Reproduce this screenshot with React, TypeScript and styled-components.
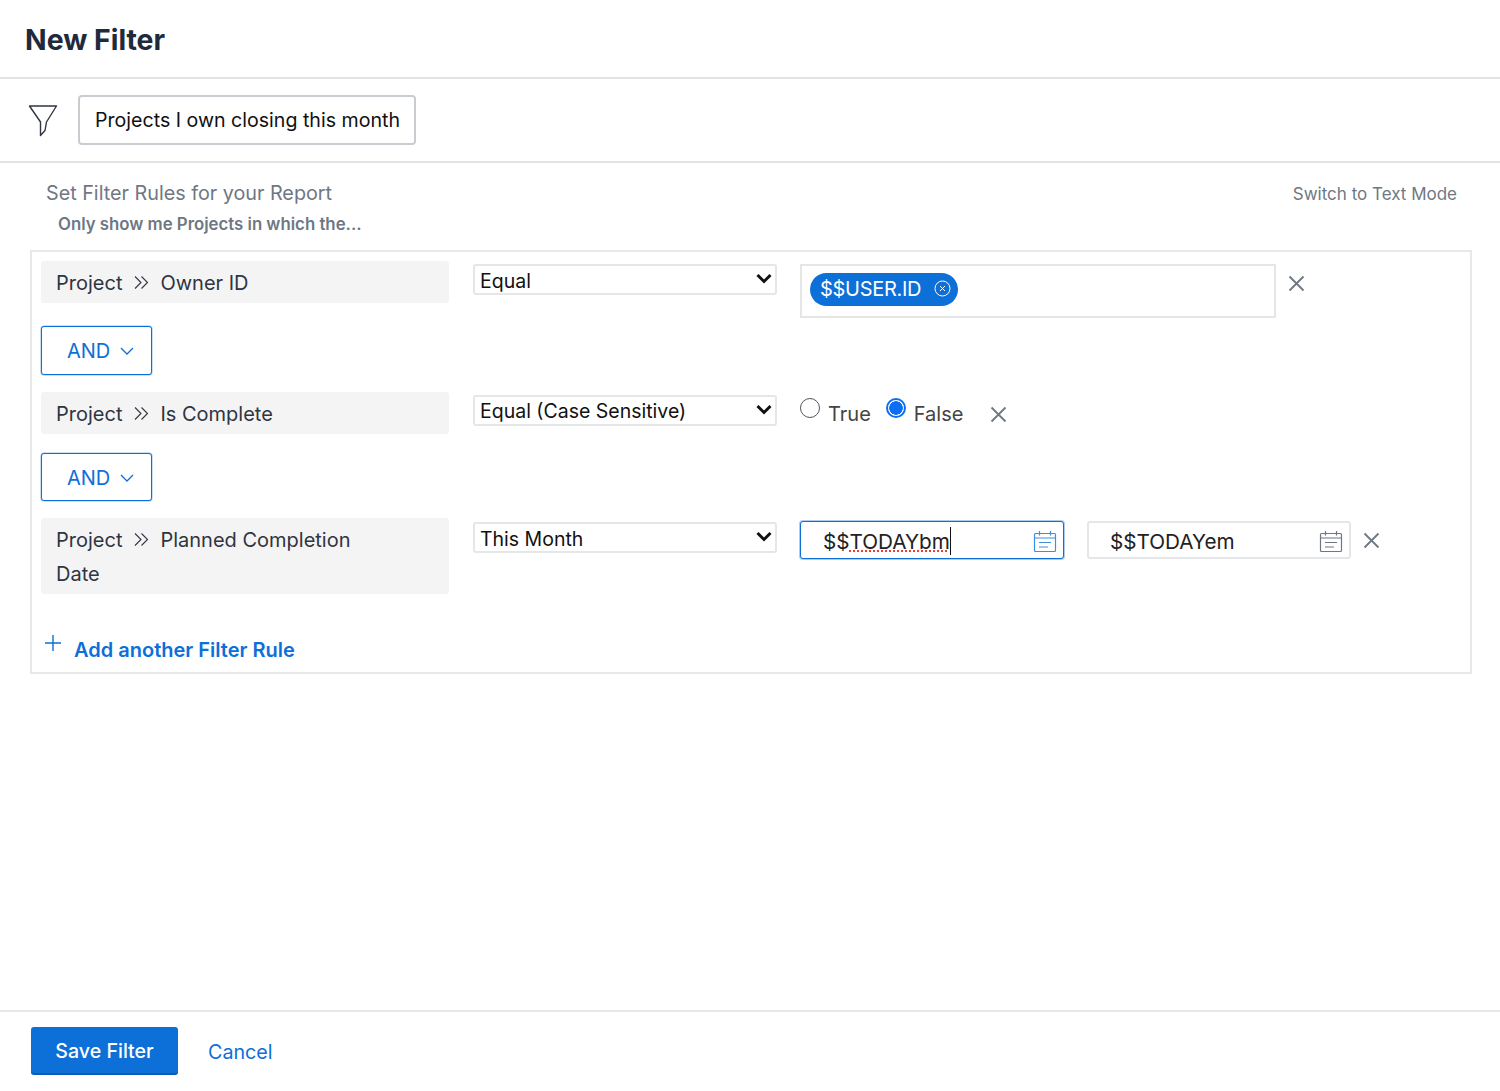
import styled, { createGlobalStyle } from "styled-components";

const BLUE = "#0d6fd8";

const GlobalStyle = createGlobalStyle`
    html, body {
        margin: 0;
        padding: 0;
        background: #fff;
    }
    body {
        font-family: "Inter", "Liberation Sans", sans-serif;
    }
    * {
        box-sizing: border-box;
    }
`;

function Chevrons() {
    return (
        <svg width="15" height="15" viewBox="0 0 15 15" fill="none" stroke="#2f3542" strokeWidth="1.1">
            <path d="M1 1.5 L7 7.5 L1 13.5" />
            <path d="M7.5 1.5 L13.5 7.5 L7.5 13.5" />
        </svg>
    );
}

function CloseIcon() {
    return (
        <svg width="17" height="17" viewBox="0 0 17 17" fill="none" stroke="#6f7782" strokeWidth="1.8">
            <path d="M1.5 1.5 L15.5 15.5 M15.5 1.5 L1.5 15.5" />
        </svg>
    );
}

function CalendarIcon(props: { color: string }) {
    return (
        <svg width="24" height="24" viewBox="0 0 24 24" fill="none" stroke={props.color} strokeWidth="1.2">
            <rect x="1.5" y="4.5" width="21" height="18" rx="1" />
            <path d="M1.5 9 H22.5 M6.5 2 V6.5 M17.5 2 V6.5 M6 13.5 H18 M6 18 H15" />
        </svg>
    );
}

function SmallChevron() {
    return (
        <svg width="14" height="8" viewBox="0 0 14 8" fill="none" stroke={BLUE} strokeWidth="1.3">
            <path d="M1 1 L7 7 L13 1" />
        </svg>
    );
}

function FieldPath(props: { name: string }) {
    return (
        <FieldBox>
            Project
            <ChevronGap><Chevrons /></ChevronGap>
            {props.name}
        </FieldBox>
    );
}

function Operator(props: { value: string; offset?: number }) {
    return (
        <SelectWrap $top={props.offset ?? 3}>
            <Select defaultValue={props.value}>
                <option>{props.value}</option>
            </Select>
            <SelectArrow width="16" height="11" viewBox="0 0 16 11" fill="none" stroke="#111" strokeWidth="3">
                <path d="M1.5 2 L8 8.5 L14.5 2" />
            </SelectArrow>
        </SelectWrap>
    );
}

export default function App() {
    return (
        <Page>
            <GlobalStyle />
            <Header>
                <Title>New Filter</Title>
            </Header>
            <NameRow>
                <svg width="30" height="34" viewBox="0 0 30 34" fill="none" stroke="#2f3542" strokeWidth="1.4">
                    <path d="M1.5 3 H28.5 L18.5 19 L17 27.5 L12.5 32.5 V19 Z" strokeLinejoin="round" />
                </svg>
                <NameInput defaultValue="Projects I own closing this month" />
            </NameRow>
            <Intro>
                <IntroTop>
                    <IntroTitle>Set Filter Rules for your Report</IntroTitle>
                    <SwitchLink>Switch to Text Mode</SwitchLink>
                </IntroTop>
                <IntroHint>Only show me Projects in which the...</IntroHint>
            </Intro>
            <RulesBox>
                <RuleRow>
                    <FieldPath name="Owner ID" />
                    <Operator value="Equal" />
                    <ValueCell>
                        <TagBox>
                            <Tag>
                                $$USER.ID
                                <svg width="17" height="17" viewBox="0 0 17 17" fill="none" stroke="#fff" strokeWidth="1">
                                    <circle cx="8.5" cy="8.5" r="7.5" />
                                    <path d="M6 6 L11 11 M11 6 L6 11" />
                                </svg>
                            </Tag>
                        </TagBox>
                        <CloseButton><CloseIcon /></CloseButton>
                    </ValueCell>
                </RuleRow>
                <AndButton $top={8} $bottom={17}>AND <SmallChevron /></AndButton>
                <RuleRow>
                    <FieldPath name="Is Complete" />
                    <Operator value="Equal (Case Sensitive)" />
                    <ValueCell>
                        <RadioLabel>
                            <Radio name="complete" />
                            True
                        </RadioLabel>
                        <RadioLabel>
                            <Radio name="complete" defaultChecked />
                            False
                        </RadioLabel>
                        <CloseButton><CloseIcon /></CloseButton>
                    </ValueCell>
                </RuleRow>
                <AndButton $top={19} $bottom={17}>AND <SmallChevron /></AndButton>
                <RuleRow>
                    <FieldPath name="Planned Completion Date" />
                    <Operator value="This Month" offset={4} />
                    <ValueCell>
                        <DateBox $focused>
                            <DateText>
                                $$<Misspelt>TODAYbm</Misspelt><Caret />
                            </DateText>
                            <CalendarIcon color="#3f8ee0" />
                        </DateBox>
                        <DateBox>
                            <DateText>$$TODAYem</DateText>
                            <CalendarIcon color="#6f7782" />
                        </DateBox>
                        <CloseButton><CloseIcon /></CloseButton>
                    </ValueCell>
                </RuleRow>
                <AddRule>
                    <svg width="18" height="18" viewBox="0 0 18 18" fill="none" stroke={BLUE} strokeWidth="1.4">
                        <path d="M9 1 V17 M1 9 H17" />
                    </svg>
                    <AddText>Add another Filter Rule</AddText>
                </AddRule>
            </RulesBox>
            <Footer>
                <SaveButton>Save Filter</SaveButton>
                <CancelLink>Cancel</CancelLink>
            </Footer>
        </Page>
    );
}

const Page = styled.div`
    display: flex;
    flex-direction: column;
    height: 1091px;
    overflow: hidden;
    background: #fff;
`;

const Header = styled.div`
    display: flex;
    align-items: center;
    height: 79px;
    padding: 2px 25px 0;
    border-bottom: 2px solid #e1e3e5;
`;

const Title = styled.h1`
    margin: 0;
    font-size: 28.4px;
    font-weight: 700;
    color: #1f2a3c;
`;

const NameRow = styled.div`
    display: flex;
    align-items: center;
    gap: 20px;
    height: 84px;
    padding: 0 0 0 28px;
    border-bottom: 2px solid #e1e3e5;
`;

const NameInput = styled.input`
    width: 338px;
    height: 50px;
    padding: 0 15px;
    border: 2px solid #c9ccd1;
    border-radius: 4px;
    font-family: inherit;
    font-size: 19.6px;
    color: #111;
    outline: none;
`;

const Intro = styled.div`
    display: flex;
    flex-direction: column;
    height: 87px;
    padding: 18px 43px 0 46px;
`;

const IntroTop = styled.div`
    display: flex;
    justify-content: space-between;
    align-items: center;
`;

const IntroTitle = styled.span`
    font-size: 19.75px;
    color: #6f7782;
`;

const SwitchLink = styled.span`
    padding-top: 2px;
    font-size: 17px;
    color: #6f7782;
`;

const IntroHint = styled.div`
    margin: 9px 0 0 12px;
    font-size: 16.8px;
    font-weight: 600;
    color: #6f7782;
`;

const RulesBox = styled.div`
    width: 1442px;
    height: 424px;
    margin-left: 30px;
    padding: 9px 8px 0 9px;
    border: 2px solid #e6e8ea;
    flex-shrink: 0;
`;

const RuleRow = styled.div`
    display: grid;
    grid-template-columns: 408px 304px 1fr;
    column-gap: 24px;
    align-items: start;
`;

const FieldBox = styled.div`
    padding: 5px 70px 3px 15px;
    min-height: 42px;
    border-radius: 3px;
    background: #f4f4f4;
    font-size: 20px;
    line-height: 34px;
    color: #2f3542;
`;

const ChevronGap = styled.span`
    display: inline-block;
    margin: 0 11px 0 12px;
`;

const SelectWrap = styled.div<{ $top: number }>`
    position: relative;
    margin-top: ${(props) => props.$top}px;
`;

const Select = styled.select`
    display: block;
    width: 100%;
    height: 31px;
    padding: 2px 5px 0;
    appearance: none;
    border: 2px solid #e4e6e8;
    border-radius: 3px;
    background: #fff;
    font-family: inherit;
    font-size: 19.5px;
    color: #111;
`;

const SelectArrow = styled.svg`
    position: absolute;
    top: 9px;
    right: 5px;
    pointer-events: none;
`;

const ValueCell = styled.div`
    display: flex;
    align-items: flex-start;
    margin-left: -1px;
`;

const TagBox = styled.div`
    display: flex;
    align-items: flex-start;
    width: 476px;
    height: 54px;
    margin-top: 3px;
    padding: 7px 8px;
    border: 2px solid #e4e6e8;
`;

const Tag = styled.span`
    display: inline-flex;
    align-items: center;
    gap: 13px;
    height: 33px;
    padding: 0 7px 2px 10px;
    border-radius: 17px;
    background: ${BLUE};
    font-size: 20px;
    letter-spacing: -0.3px;
    color: #fff;
`;

const CloseButton = styled.span`
    display: block;
    height: 17px;
    margin-left: 12px;
    margin-top: 14px;
    line-height: 0;
`;

const RadioLabel = styled.label`
    display: flex;
    align-items: flex-start;
    gap: 8px;
    margin-right: 15px;
    padding-top: 10px;
    font-size: 20px;
    line-height: 24px;
    color: #444;
`;

const Radio = styled.input.attrs({ type: "radio" })`
    appearance: none;
    width: 20px;
    height: 20px;
    margin: -4px 0 0;
    border: 1.5px solid #555;
    border-radius: 50%;
    background: #fff;

    &:checked {
        border: 2px solid #0b6ef5;
        background: radial-gradient(circle, #0b6ef5 0 6.5px, #fff 7px);
    }
`;

const DateBox = styled.div<{ $focused?: boolean }>`
    display: flex;
    align-items: center;
    justify-content: space-between;
    width: 264px;
    height: 38px;
    margin-top: 3px;
    margin-right: ${(props) => (props.$focused ? "23px" : "0")};
    padding: 2px 6px 0 ${(props) => (props.$focused ? "22px" : "21px")};
    border: ${(props) => (props.$focused ? `1px solid ${BLUE}` : "2px solid #e4e6e8")};
    box-shadow: ${(props) => (props.$focused ? "0 0 0 1px rgba(13, 111, 216, 0.35)" : "none")};
    border-radius: 3px;
    background: #fff;
`;

const DateText = styled.span`
    display: inline-flex;
    align-items: center;
    font-size: 20.7px;
    color: #222;
`;

const Misspelt = styled.span`
    text-decoration: underline dotted #f03a3a 2px;
    text-underline-offset: 2px;
`;

const Caret = styled.span`
    width: 1px;
    height: 28px;
    background: #111;
`;

const AndButton = styled.button<{ $top: number; $bottom: number }>`
    display: flex;
    align-items: center;
    gap: 10px;
    width: 111px;
    height: 48.5px;
    margin: ${(props) => props.$top}px 0 ${(props) => props.$bottom}px;
    padding: 2px 0 0 25px;
    border: 1px solid ${BLUE};
    box-shadow: 0 0 0 0.5px rgba(13, 111, 216, 0.45);
    border-radius: 3px;
    background: #fff;
    font-family: inherit;
    font-size: 20px;
    color: ${BLUE};
`;

const AddRule = styled.div`
    display: flex;
    align-items: flex-start;
    gap: 12px;
    margin: 40px 0 0 3px;
`;

const AddText = styled.span`
    margin-top: 4px;
    font-size: 20px;
    font-weight: 600;
    color: ${BLUE};
`;

const Footer = styled.div`
    display: flex;
    align-items: center;
    gap: 30px;
    margin-top: auto;
    height: 81px;
    padding: 0 30px 2px 31px;
    border-top: 2px solid #e6e7e8;
`;

const SaveButton = styled.button`
    width: 147px;
    height: 48px;
    padding: 2px 0 0;
    border: none;
    border-bottom: 2px solid #0a5cb5;
    border-radius: 3px;
    background: ${BLUE};
    font-family: inherit;
    font-size: 19.6px;
    font-weight: 500;
    color: #fff;
`;

const CancelLink = styled.span`
    padding-top: 2px;
    font-size: 19.7px;
    color: ${BLUE};
`;
